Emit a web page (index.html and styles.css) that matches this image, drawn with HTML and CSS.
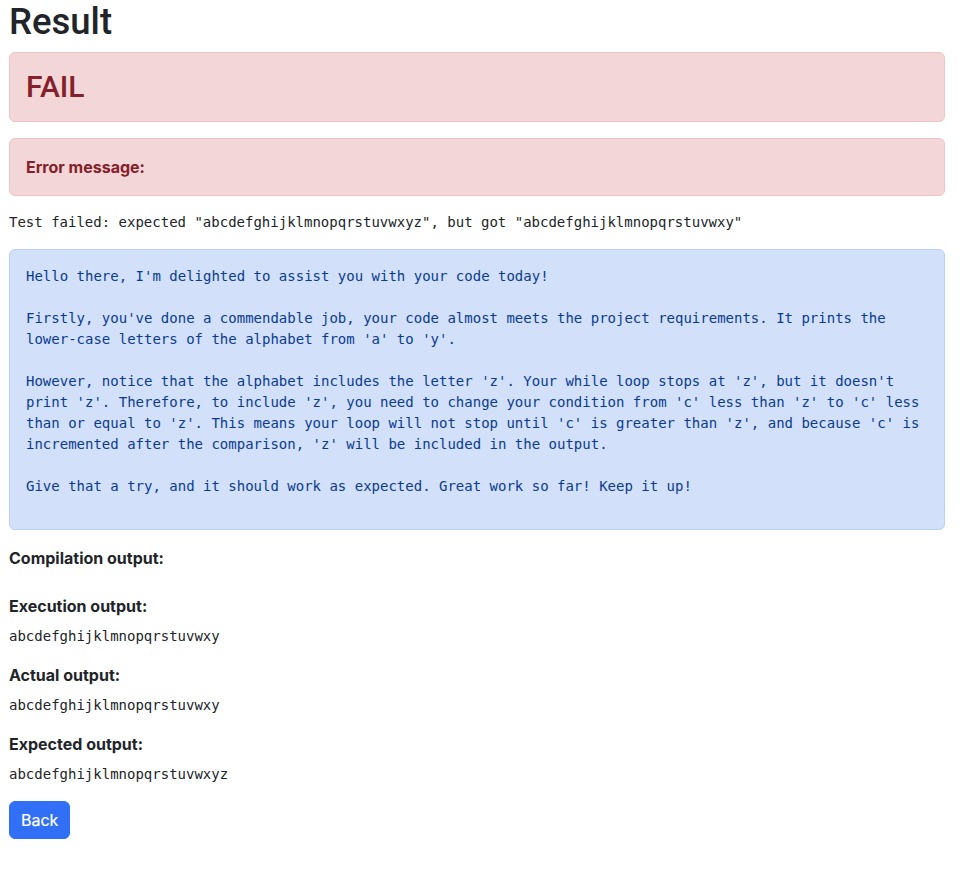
FILE: index.html
```html
<!DOCTYPE html>
<html lang="en">
<head>
<meta charset="utf-8">
<title>Result</title>
<link rel="stylesheet" href="styles.css">
</head>
<body>
<main class="page">
  <h1 class="title">Result</h1>
  <div class="alert alert-danger">
    <h2 class="status">FAIL</h2>
  </div>
  <div class="alert alert-danger">
    <strong class="alert-label">Error message:</strong>
  </div>
  <pre class="code">Test failed: expected "abcdefghijklmnopqrstuvwxyz", but got "abcdefghijklmnopqrstuvwxy"</pre>
  <div class="alert alert-primary">
    <pre class="code feedback">Hello there, I'm delighted to assist you with your code today!

Firstly, you've done a commendable job, your code almost meets the project requirements. It prints the lower-case letters of the alphabet from 'a' to 'y'.

However, notice that the alphabet includes the letter 'z'. Your while loop stops at 'z', but it doesn't print 'z'. Therefore, to include 'z', you need to change your condition from 'c' less than 'z' to 'c' less than or equal to 'z'. This means your loop will not stop until 'c' is greater than 'z', and because 'c' is incremented after the comparison, 'z' will be included in the output.

Give that a try, and it should work as expected. Great work so far! Keep it up!</pre>
  </div>

  <h6 class="section-title">Compilation output:</h6>
  <pre class="code"></pre>

  <h6 class="section-title">Execution output:</h6>
  <pre class="code">abcdefghijklmnopqrstuvwxy</pre>

  <h6 class="section-title">Actual output:</h6>
  <pre class="code">abcdefghijklmnopqrstuvwxy</pre>

  <h6 class="section-title">Expected output:</h6>
  <pre class="code">abcdefghijklmnopqrstuvwxyz</pre>

  <a class="btn btn-primary" href="#">Back</a>
</main>
</body>
</html>
```

FILE: styles.css
```css
* {
  box-sizing: border-box;
}

html, body {
  margin: 0;
  padding: 0;
  background: #ffffff;
}

body {
  font-family: Inter, "Liberation Sans", Arial, sans-serif;
  font-size: 16px;
  line-height: 1.5;
  color: #212529;
}

.page {
  width: 936px;
  margin: 0 0 0 9px;
  display: flex;
  flex-direction: column;
  align-items: stretch;
}

.title {
  margin: 0 0 8px;
  font-family: Roboto, Inter, "Liberation Sans", Arial, sans-serif;
  font-size: 36.5px;
  font-weight: 500;
  line-height: 1.2;
}

.alert {
  padding: 16px;
  margin-bottom: 16px;
  border: 1px solid transparent;
  border-radius: 6px;
}

.alert-danger {
  color: #842029;
  background-color: #f3d6d8;
  border-color: #efc3c7;
}

.alert-primary {
  color: #0a3b91;
  background-color: #d2e0fa;
  border-color: #b9d1f6;
}

.status {
  margin: 0;
  font-family: Roboto, Inter, "Liberation Sans", Arial, sans-serif;
  font-size: 30px;
  font-weight: 500;
  line-height: 1.2;
}

.alert-label {
  display: block;
  font-weight: 700;
  line-height: 24px;
}

.code {
  font-family: "DejaVu Sans Mono", Menlo, "Liberation Mono", monospace;
  font-size: 14px;
  line-height: 1.5;
  margin: 0 0 16px;
  white-space: pre-wrap;
  word-wrap: break-word;
}

.feedback {
  color: inherit;
}

.section-title {
  margin: 0 0 8px;
  font-size: 16px;
  font-weight: 700;
  line-height: 24px;
}

.btn {
  align-self: flex-start;
  display: inline-block;
  padding: 6px 11px;
  font-size: 16px;
  font-weight: 400;
  line-height: 24px;
  text-decoration: none;
  border: 1px solid transparent;
  border-radius: 6px;
  -webkit-text-stroke: 0.2px currentColor;
}

.btn-primary {
  color: #ffffff;
  background-color: #316ff6;
  border-color: #316ff6;
}
```
